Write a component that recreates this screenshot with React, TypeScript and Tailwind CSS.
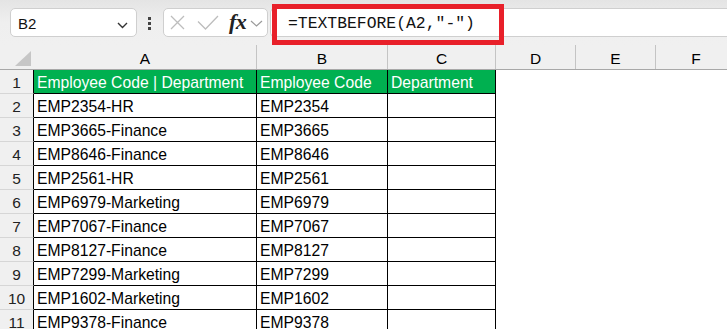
import React from "react";

const cols = [
  { l: "A", w: 223 },
  { l: "B", w: 131 },
  { l: "C", w: 108 },
  { l: "D", w: 80 },
  { l: "E", w: 80 },
  { l: "F", w: 80 },
];

const rows: [string, string, string][] = [
  ["Employee Code | Department", "Employee Code", "Department"],
  ["EMP2354-HR", "EMP2354", ""],
  ["EMP3665-Finance", "EMP3665", ""],
  ["EMP8646-Finance", "EMP8646", ""],
  ["EMP2561-HR", "EMP2561", ""],
  ["EMP6979-Marketing", "EMP6979", ""],
  ["EMP7067-Finance", "EMP7067", ""],
  ["EMP8127-Finance", "EMP8127", ""],
  ["EMP7299-Marketing", "EMP7299", ""],
  ["EMP1602-Marketing", "EMP1602", ""],
  ["EMP9378-Finance", "EMP9378", ""],
];

const sans = { fontFamily: '"Liberation Sans", Arial, sans-serif' };

export default function App() {
  return (
    <div
      className="relative w-[727px] h-[329px] overflow-hidden bg-white text-black"
      style={sans}
    >
      {/* Toolbar */}
      <div className="h-[45px] bg-gradient-to-b from-[#e4e4e4] via-[#efefef] to-[#f0f0f0] flex items-start pt-[8px] pl-[10px]">
        {/* Name box */}
        <div className="w-[127px] h-[29px] bg-white border border-[#cfcfcf] rounded-[5px] flex items-start pl-[7px] shrink-0">
          <span className="text-[15px] leading-[29px] h-[27px] text-[#111]">B2</span>
          <svg
            className="ml-auto mr-[8px] mt-[13px]"
            width="11"
            height="7"
            viewBox="0 0 11 7"
          >
            <path d="M1 1 L5.5 5.5 L10 1" fill="none" stroke="#333" strokeWidth="1.4" />
          </svg>
        </div>
        {/* dots */}
        <div className="ml-[11px] mt-[9px] flex flex-col gap-[2px] shrink-0">
          <div className="w-[3px] h-[3px] bg-[#444]" />
          <div className="w-[3px] h-[3px] bg-[#444]" />
          <div className="w-[3px] h-[3px] bg-[#444]" />
        </div>
        {/* fx box */}
        <div className="ml-[12px] w-[105px] h-[29px] bg-white border border-[#cfcfcf] rounded-[5px] flex items-start pl-[6px] shrink-0">
          <svg className="mt-[6px]" width="15" height="15" viewBox="0 0 15 15">
            <path d="M1 1 L14 14 M14 1 L1 14" stroke="#bdbdbd" strokeWidth="1.3" fill="none" />
          </svg>
          <svg className="ml-[12px] mt-[6px]" width="22" height="15" viewBox="0 0 22 15">
            <path d="M1 6.5 L8.5 14 L21 1" stroke="#bdbdbd" strokeWidth="1.3" fill="none" />
          </svg>
          <span
            className="ml-[10px] text-[22px] leading-[26px] italic font-semibold text-[#222] tracking-[-0.5px]"
            style={{ fontFamily: '"Liberation Serif", "Times New Roman", serif' }}
          >
            fx
          </span>
          <svg className="ml-[4px] mt-[11px]" width="13" height="7" viewBox="0 0 13 7">
            <path d="M1 1 L6.5 6 L12 1" fill="none" stroke="#9a9a9a" strokeWidth="1.2" />
          </svg>
        </div>
        {/* formula input */}
        <div className="ml-[2px] flex-1 h-[29px] bg-white border-y border-l border-[#cfcfcf] rounded-l-[5px] pl-[17px]">
          <span
            className="text-[16.4px] leading-[29px] text-[#111] whitespace-pre"
            style={{ fontFamily: '"Liberation Mono", "Courier New", monospace' }}
          >
            =TEXTBEFORE(A2,"-")
          </span>
        </div>
      </div>

      {/* Column header */}
      <div className="flex h-[25px] bg-[#f0f0f0] border-b border-[#a8a8a8]">
        <div className="w-[34px] h-[24px] shrink-0 relative">
          <svg className="absolute left-[15px] top-[6px]" width="16" height="15" viewBox="0 0 16 15">
            <path d="M16 0 L16 15 L0 15 Z" fill="#c6c6c6" />
          </svg>
        </div>
        {cols.map((c, i) => (
          <div
            key={c.l}
            className={`h-[24px] shrink-0 text-center text-[15.5px] leading-[27px] ${
              i < 5 ? "border-r border-[#c4c4c4]" : ""
            }`}
            style={{ width: c.w }}
          >
            {c.l}
          </div>
        ))}
      </div>

      {/* Rows */}
      {rows.map((r, ri) => (
        <div key={ri} className="flex h-[24px]">
          <div className="w-[34px] h-[24px] shrink-0 bg-[#f0f0f0] border-r border-black border-b border-b-[#d6d6d6] text-center text-[15.5px] leading-[26px] text-[#222]">
            {ri + 1}
          </div>
          {r.map((v, ci) => (
            <div
              key={ci}
              className={`h-[24px] shrink-0 border-r border-b border-black pl-[3px] text-[15.7px] leading-[26px] whitespace-nowrap overflow-hidden ${
                ri === 0 ? "bg-[#00b050] text-white" : "bg-white text-black"
              }`}
              style={{ width: cols[ci].w }}
            >
              {v}
            </div>
          ))}
          <div className="flex-1 bg-white" />
        </div>
      ))}

      {/* Red annotation box */}
      <div className="absolute left-[272px] top-[4px] w-[232px] h-[41px] border-[5px] border-[#e8202a]" />
    </div>
  );
}
